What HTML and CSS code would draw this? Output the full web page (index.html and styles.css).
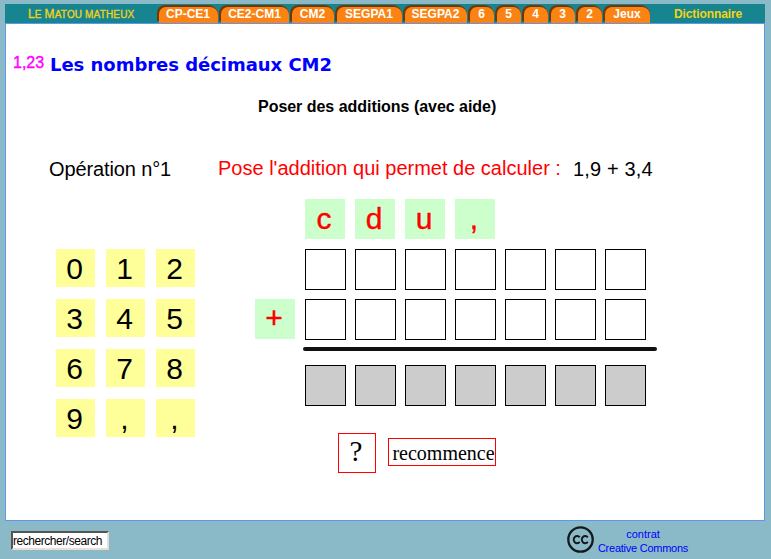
FILE: index.html
```html
<!DOCTYPE html>
<html lang="fr">
<head>
<meta charset="utf-8">
<title>Les nombres décimaux CM2</title>
<link rel="stylesheet" href="styles.css">
</head>
<body>
<nav class="bar">
  <a class="brand"><em>L</em>E <em>M</em>ATOU MATHEUX</a>
  <div class="tabs">
    <a class="tab t-cp"><span>CP-CE1</span></a>
    <a class="tab t-ce"><span>CE2-CM1</span></a>
    <a class="tab t-cm"><span>CM2</span></a>
    <a class="tab t-s1"><span>SEGPA1</span></a>
    <a class="tab t-s2"><span>SEGPA2</span></a>
    <a class="tab"><span>6</span></a>
    <a class="tab"><span>5</span></a>
    <a class="tab"><span>4</span></a>
    <a class="tab"><span>3</span></a>
    <a class="tab"><span>2</span></a>
    <a class="tab t-jeux"><span>Jeux</span></a>
  </div>
  <a class="dict">Dictionnaire</a>
</nav>
<main class="panel">
  <header class="head"><span class="num">1,23</span><h1>Les nombres décimaux CM2</h1></header>
  <h2><span>Poser des additions (avec aide)</span></h2>
  <div class="question">
    <span class="op">Opération n°1</span>
    <span class="ask">Pose l'addition qui permet de calculer :</span>
    <span class="calc">1,9 + 3,4</span>
  </div>
  <div class="work">
    <div class="keys">
      <b>0</b><b>1</b><b>2</b><b>3</b><b>4</b><b>5</b><b>6</b><b>7</b><b>8</b><b>9</b><b>,</b><b>,</b>
    </div>
    <div class="sum">
      <div class="row labels"><b>c</b><b>d</b><b>u</b><b>,</b></div>
      <div class="row"><i></i><i></i><i></i><i></i><i></i><i></i><i></i></div>
      <div class="row plus"><b>+</b><i></i><i></i><i></i><i></i><i></i><i></i><i></i></div>
      <div class="rule"></div>
      <div class="row result"><i></i><i></i><i></i><i></i><i></i><i></i><i></i></div>
      <div class="actions"><a class="help">?</a><a class="again">recommence</a></div>
    </div>
  </div>
</main>
<footer>
  <div class="search"><span>rechercher/search</span></div>
  <svg class="cc" width="28" height="28" viewBox="0 0 28 28" fill="none" stroke="#16191c">
    <circle cx="13.5" cy="13.5" r="12.2" stroke-width="2.3"/>
    <path d="M12.7 11.3A3.4 3.6 0 1 0 12.7 15.9M20.8 11.3A3.4 3.6 0 1 0 20.8 15.9" stroke-width="1.9"/>
  </svg>
  <div class="licence"><span class="l1">contrat</span><span class="l2">Creative Commons</span></div>
</footer>
</body>
</html>
```
FILE: styles.css
```css
* { box-sizing: border-box; }
body {
  margin: 0;
  padding: 4px 6px 0 5px;
  height: 559px;
  overflow: hidden;
  background: #8abac8;
  font-family: "Liberation Sans", Arial, sans-serif;
  color: #000;
}
span, a { white-space: nowrap; }
.bar {
  display: flex;
  height: 19px;
  background: #17858f;
  font-size: 12px;
  font-weight: bold;
  line-height: 14px;
}
.brand {
  width: 152px;
  padding: 3px 0 0 23px;
  color: #f0d020;
  font-weight: normal;
  font-size: 10px;
  letter-spacing: .15px;
  -webkit-text-stroke: .35px #f0d020;
}
.brand em { font-style: normal; font-size: 12px; }
.tabs { display: flex; padding-top: 1px; gap: 1px; }
.tab {
  width: 26px;
  height: 18px;
  padding: 2px 0 0 2px;
  border-radius: 8px 9px 0 0;
  background: linear-gradient(#703808 16px, transparent 16px);
  color: #fff;
  text-align: center;
}
.tab span {
  display: block;
  height: 16px;
  padding-right: 1px;
  line-height: 14px;
  border-radius: 7px 8px 0 0;
  background: #fb8313;
}
.t-cp { width: 61px; }
.t-ce { width: 70px; }
.t-cm { width: 44px; }
.t-s1 { width: 67px; }
.t-s2 { width: 64px; }
.t-jeux { width: 47px; }
.dict { margin: 3px 0 0 24px; color: #f5d310; letter-spacing: -.1px; }
.panel {
  height: 498px;
  border: 1px solid #6495ed;
  background: #fff;
}
.head { display: flex; height: 73px; padding: 28px 0 0 7px; }
.num {
  width: 37px;
  font-size: 16px;
  line-height: 22px;
  color: #f0f;
  -webkit-text-stroke: .4px #f0f;
}
h1 {
  margin: 2px 0 0;
  font: bold 18px/22px "DejaVu Sans", Verdana, sans-serif;
  letter-spacing: -.03px;
  color: #00f;
}
h2 { margin: 0 0 0 252px; font-size: 16px; line-height: 20px; height: 61px; letter-spacing: -.03px; }
.question { display: flex; height: 41px; font-size: 20px; line-height: 22px; margin-left: 43px; }
.op { width: 169px; letter-spacing: -.12px; }
.ask { width: 355px; color: #f00; line-height: 21px; }
.calc { letter-spacing: .15px; }
.work { display: flex; padding-left: 50px; }
.work b { font-weight: normal; font-size: 30px; text-align: center; }
.keys {
  display: grid;
  grid-template-columns: repeat(3, 39px);
  grid-auto-rows: 38px;
  gap: 12px 11px;
  width: 199px;
  height: 188px;
  margin-top: 50px;
}
.keys b { background: #ff9; line-height: 40px; padding-right: 2px; }
.row { display: flex; gap: 9px; height: 50px; margin-left: 50px; }
.row b { width: 40px; height: 40px; line-height: 40px; padding-right: 2px; background: #cfc; color: #f00; -webkit-text-stroke: .4px #f00; }
.row i { width: 41px; height: 41px; border: 1px solid #000; }
.labels { gap: 10px; }
.plus { margin-left: 0; }
.plus b { margin-right: 1px; line-height: 38px; }
.rule { width: 354px; height: 4px; margin: -2px 0 14px 48px; border-radius: 2px; background: #111; }
.result { height: 68px; }
.result i { background: #ccc; }
.actions { display: flex; gap: 12px; margin-left: 83px; font-family: "Liberation Serif", serif; }
.actions a { border: 1px solid #f00; text-align: center; }
.help { width: 38px; height: 40px; padding-right: 2px; font-size: 29px; line-height: 35px; }
.again { width: 108px; height: 28px; margin-top: 5px; padding-left: 3px; font-size: 20px; line-height: 28px; }
footer { display: flex; height: 38px; }
.search {
  width: 98px;
  height: 19px;
  margin: 10px 458px 0 6px;
  border: 2px solid;
  border-color: #555 #e4e0d8 #e4e0d8 #555;
  background: #fff;
  font-size: 12px;
  line-height: 17px;
  letter-spacing: -.45px;
}
.cc { margin-top: 5px; width: 28px; height: 28px; flex: none; }
.licence {
  width: 100px;
  margin: 6px 0 0 -2px;
  color: #00f;
  font-size: 11px;
  line-height: 14px;
  text-align: center;
}
.licence span { display: block; }
.licence .l2 { letter-spacing: -.25px; }
```
